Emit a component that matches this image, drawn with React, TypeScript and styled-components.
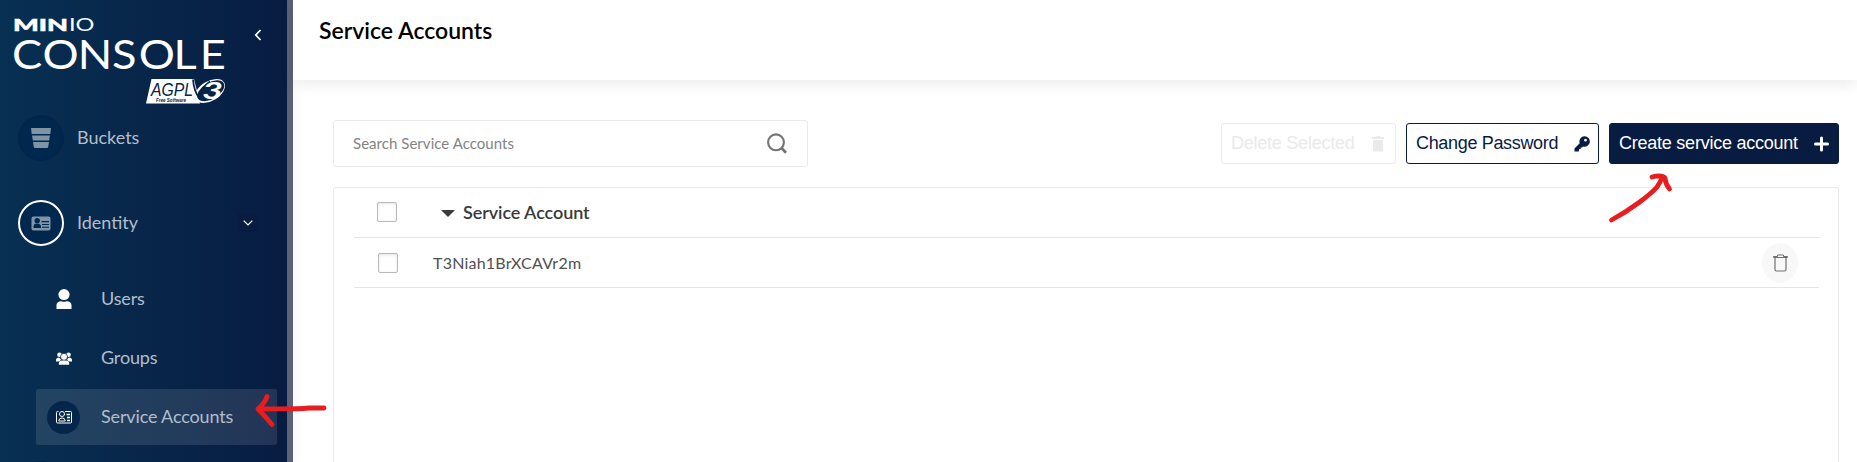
import React from "react";
import styled, { createGlobalStyle, css } from "styled-components";

const GlobalStyle = createGlobalStyle`
  *, *::before, *::after { box-sizing: border-box; }
  html, body { margin: 0; padding: 0; background: #fff; }
  body { overflow: hidden; font-family: Lato, "Liberation Sans", sans-serif; }
  svg { display: block; flex: none; }
`;

const Shell = styled.div`
  position: relative;
  display: flex;
  width: 1857px;
  height: 462px;
  overflow: hidden;
`;

const Sidebar = styled.aside`
  flex: 0 0 293px;
  display: flex;
  flex-direction: column;
  border-right: 6px solid #5b6276;
  background: linear-gradient(90deg, #073052 0%, #081c42 100%) padding-box;
  color: #b2becb;
  font-size: 18px;
`;

const Brand = styled.div`
  flex: none;
  display: flex;
  height: 115px;
  padding: 15px 0 0 10px;
`;

const Collapse = styled.div`
  margin: 14px 0 0 24px;
`;

const MenuItem = styled.div<{ $gap?: number }>`
  flex: none;
  display: flex;
  align-items: center;
  height: 46px;
  margin-bottom: ${(p) => p.$gap ?? 0}px;
  padding: 0 30px 0 18px;
`;

const MenuIcon = styled.span<{ $active?: boolean }>`
  display: flex;
  align-items: center;
  justify-content: center;
  width: 46px;
  height: 46px;
  margin-right: 13px;
  border-radius: 50%;
  border: 2px solid ${(p) => (p.$active ? "#fff" : "#04254a")};
  background: #00274d;
`;

const MenuLabel = styled.span`
  flex: 1;
  padding-bottom: 2px;
  white-space: nowrap;
`;

const Toggle = styled.span`
  display: flex;
  align-items: center;
  justify-content: center;
  width: 19px;
  height: 18px;
  border-radius: 2px;
  background: #081c42;
`;

const SubMenu = styled.div`
  flex: none;
  display: flex;
  flex-direction: column;
  gap: 3px;
  margin-bottom: 16px;
  padding: 0 10px 0 36px;
  letter-spacing: -0.15px;
`;

const SubItem = styled.div<{ $selected?: boolean }>`
  display: flex;
  align-items: center;
  height: 56px;
  padding-left: 11px;
  border-radius: 2px;
  ${(p) => p.$selected && css`background: rgba(255, 255, 255, 0.11);`}
`;

const SubIcon = styled.span<{ $selected?: boolean }>`
  display: flex;
  align-items: center;
  justify-content: center;
  width: 33px;
  height: 33px;
  margin-right: 21px;
  border-radius: 50%;
  color: #fff;
  ${(p) => p.$selected && css`background: #06254a;`}
`;

const Main = styled.main`
  flex: 1;
  display: flex;
  flex-direction: column;
  min-width: 0;
  box-shadow: inset 8px 0 8px -6px rgba(0, 0, 0, 0.04);
`;

const Header = styled.header`
  flex: 0 0 80px;
  padding: 15px 0 0 26px;
  background: #fff;
  box-shadow: 0 4px 14px rgba(0, 0, 0, 0.08);
`;

const Title = styled.h1`
  margin: 0;
  font-size: 23px;
  font-weight: 600;
  line-height: 30px;
  color: #000;
`;

const Content = styled.section`
  flex: 1;
  display: flex;
  flex-direction: column;
  padding: 40px 18px 0 40px;
`;

const Toolbar = styled.div`
  flex: none;
  display: flex;
  align-items: center;
  justify-content: space-between;
  height: 47px;
  margin-bottom: 20px;
`;

const Search = styled.div`
  display: flex;
  align-items: center;
  justify-content: space-between;
  width: 475px;
  height: 47px;
  padding: 0 20px 0 19px;
  border: 1px solid #eaeaea;
  border-radius: 3px;
  font-size: 15px;
  line-height: 18px;
  color: #838383;
`;

const SearchHint = styled.span`
  margin-top: -1px;
  letter-spacing: 0.04px;
`;

const Actions = styled.div`
  display: flex;
  gap: 10px;
`;

const Button = styled.button<{ $kind: "disabled" | "outline" | "solid"; $width: number }>`
  display: flex;
  align-items: center;
  justify-content: space-between;
  width: ${(p) => p.$width}px;
  height: 41px;
  padding: 0 8px 0 9px;
  border: 1px solid ${(p) => (p.$kind === "disabled" ? "#eaeaea" : "#081c42")};
  border-radius: 3px;
  background: ${(p) => (p.$kind === "solid" ? "#081c42" : "#fff")};
  color: ${(p) => ({ disabled: "#eaeaea", outline: "#081c42", solid: "#fff" })[p.$kind]};
  font-family: "Liberation Sans", Arial, sans-serif;
  font-size: 18px;
  letter-spacing: ${(p) => (p.$kind === "outline" ? -0.33 : -0.24)}px;
  white-space: nowrap;
`;

const Panel = styled.div`
  flex: 1;
  padding: 0 19px 0 20px;
  border: 1px solid #eaeaea;
  border-bottom: 0;
  border-radius: 3px 3px 0 0;
`;

const Row = styled.div<{ $head?: boolean }>`
  display: flex;
  align-items: center;
  height: 50px;
  padding-bottom: ${(p) => (p.$head ? 1 : 0)}px;
  padding-left: ${(p) => (p.$head ? 23 : 24)}px;
  padding-right: 21px;
  border-bottom: 1px solid #e5e5e5;
  font-size: ${(p) => (p.$head ? 18 : 16)}px;
  font-weight: ${(p) => (p.$head ? 600 : 400)};
  color: #393939;
`;

const Checkbox = styled.span`
  width: 20px;
  height: 20px;
  border: 1px solid #b9b9b9;
  border-radius: 2px;
  background: #fff;
  box-shadow: inset 0 1px 3px rgba(0, 0, 0, 0.1);
`;

const SortCell = styled.span`
  display: flex;
  align-items: center;
  gap: 8px;
  margin-left: 44px;
  letter-spacing: -0.08px;

  svg { margin-top: 3px; }
`;

const KeyCell = styled.span`
  flex: 1;
  margin-left: 35px;
  color: #505050;
  letter-spacing: 0.22px;
`;

const RowAction = styled.span`
  display: flex;
  align-items: center;
  justify-content: center;
  width: 36px;
  height: 40px;
  border-radius: 50%;
  background: #f8f8f8;
`;

const Annotations = styled.svg`
  position: absolute;
  inset: 0;
  pointer-events: none;
`;

const Logo = () => (
  <svg width="220" height="92" viewBox="10 15 220 92" fill="#fff" fontFamily="Lato, sans-serif">
    <text x="13" y="31" fontSize="17" fontWeight="900" stroke="#fff" strokeWidth=".5" textLength="55" lengthAdjust="spacingAndGlyphs">MIN</text>
    <text x="69" y="31" fontSize="17.500" fontWeight="400" textLength="25.500" lengthAdjust="spacingAndGlyphs">IO</text>
    <text transform="scale(1.13 1)" x="10.600 37.700 68.700 99.100 122.700 153.500 176.800" y="69" fontSize="40">CONSOLE</text>
    <path d="M151.500 79H194L200 103.500H146Z" />
    <ellipse cx="210" cy="91" rx="16.500" ry="9.800" transform="rotate(-31 210 91)" />
    <ellipse cx="210.800" cy="90.800" rx="15" ry="8.300" fill="#072448" transform="rotate(-31 210.800 90.800)" />
    <path d="M193 79.500Q194 91 198.500 97Q201 88 210 81.500" fill="none" stroke="#072448" strokeWidth="1.800" />
    <text x="202" y="98.500" fontSize="23" fontWeight="700" fontStyle="italic" textLength="21" lengthAdjust="spacingAndGlyphs">3</text>
    <g fill="#072448" fontFamily="Liberation Sans, sans-serif" fontStyle="italic">
      <text x="151" y="96" fontSize="18" textLength="42" lengthAdjust="spacingAndGlyphs">AGPL</text>
      <text x="156" y="101.500" fontSize="5" fontWeight="700" textLength="30" lengthAdjust="spacingAndGlyphs">Free Software</text>
    </g>
  </svg>
);

const BucketIcon = () => (
  <svg width="20" height="20" viewBox="0 0 20 20" fill="#8094a8">
    <path d="M0 0H20L19.300 6H.7ZM1.100 7.500H18.900L18.200 12.500H1.800ZM2 14H18L17.200 19Q17 20 16 20H4Q3 20 2.800 19Z" />
  </svg>
);

const IdentityIcon = () => (
  <svg width="20" height="15" viewBox="0 0 20 15">
    <rect x=".5" y=".5" width="19" height="14" rx="2" fill="#8094a8" />
    <g fill="#00274d">
      <circle cx="6.200" cy="4.800" r="2.700" />
      <path d="M2.500 12V10Q3 7.700 5 7.700H7.500Q9.600 8 10 10V12Z" />
      <path d="M10.500 5H18V6.200H10.500ZM11 8H18V9.100H11ZM11 10.700H18V11.700H11Z" />
    </g>
  </svg>
);

const UserIcon = () => (
  <svg width="16" height="20" viewBox="0 0 16 20" fill="currentColor">
    <ellipse cx="8" cy="5.600" rx="5.600" ry="5.500" />
    <path d="M.5 20V16.500C.5 13.500 3 12.200 5.500 12.200Q8 13.400 10.500 12.200C13 12.200 15.500 13.500 15.500 16.500V20Z" />
  </svg>
);

const GroupIcon = () => (
  <svg width="16" height="13" viewBox="0 0 16 13" fill="currentColor">
    <circle cx="3.500" cy="2.800" r="2.300" />
    <circle cx="12.500" cy="2.800" r="2.300" />
    <path d="M0 9.500V7.500Q.4 5.500 3 5.500L5 7.500L3.500 9.500ZM16 9.500V7.500Q15.600 5.500 13 5.500L11 7.500L12.500 9.500Z" />
    <circle cx="8" cy="4.800" r="3.500" stroke="#07294c" strokeWidth=".8" />
    <path d="M2.800 12.800V11Q3.500 8.600 6 8.600H10Q12.500 8.600 13.200 11V12.800Z" />
  </svg>
);

const AccountIcon = () => (
  <svg width="16" height="14" viewBox="0 0 16 14" fill="none" stroke="currentColor" strokeWidth="1">
    <path d="M2.500 1.500H1.500Q.5 1.500 .5 2.500V12Q.5 13 1.500 13H14.500Q15.500 13 15.500 12V2.500Q15.500 1.500 14.500 1.500H9" />
    <circle cx="6" cy="4" r="2.500" />
    <path d="M2.800 10.500Q3 8 6 8T9.200 10.500V11H2.800Z" />
    <path d="M10.500 4.500H14M11 7.500H14M11 10.500H14" strokeWidth="1.700" />
  </svg>
);

const SearchIcon = () => (
  <svg width="20" height="21" viewBox="0 0 20 21" fill="none" stroke="#747474">
    <circle cx="9" cy="9.300" r="7.900" strokeWidth="2.100" />
    <path d="M14.500 15L19 19.700" strokeWidth="2.700" />
  </svg>
);

const SolidTrash = () => (
  <svg width="18" height="16" viewBox="0 0 18 16" fill="currentColor">
    <path d="M3 1H7L7.800 0H11.200L12 1H15V3H3ZM4 4H14V14Q14 15.500 12.500 15.500H5.500Q4 15.500 4 14Z" />
  </svg>
);

const KeyIcon = () => (
  <svg width="16" height="16" viewBox="0 0 16 16" fill="currentColor" fillRule="evenodd">
    <path d="M10.500 .3A5.200 5.200 0 1 1 9.200 10.500L8 11.500H6.700V13H5.200L4.800 15.500H.8Q.5 15.500 .5 15V12.500L5.700 7.200A5.200 5.200 0 0 1 10.500 .3ZM11.500 2.800A1.400 1.400 0 1 0 11.500 5.600A1.400 1.400 0 1 0 11.500 2.800Z" />
  </svg>
);

const PlusIcon = () => (
  <svg width="17" height="16" viewBox="0 0 17 16" stroke="currentColor" strokeWidth="3" strokeLinecap="round">
    <path d="M8.500 2V14M2.500 8H14.500" />
  </svg>
);

const OutlineTrash = () => (
  <svg width="15" height="18" viewBox="0 0 15 18" fill="none" stroke="#707070">
    <path d="M.5 3.500V2.500H4.500V1H10.500V2.500H14.500V3.500Z" strokeWidth="1" />
    <path d="M2 4V15.500Q2 17 3.500 17H11.500Q13 17 13 15.500V4" strokeWidth="1.200" />
  </svg>
);

export default function App() {
  return (
    <Shell>
      <GlobalStyle />
      <Sidebar>
        <Brand>
          <Logo />
          <Collapse>
            <svg width="8" height="12" viewBox="0 0 8 12" fill="none" stroke="#fff" strokeWidth="1.800"><path d="M6.500 1L1.800 6L6.500 11" /></svg>
          </Collapse>
        </Brand>
        <MenuItem $gap={39}>
          <MenuIcon><BucketIcon /></MenuIcon>
          <MenuLabel>Buckets</MenuLabel>
        </MenuItem>
        <MenuItem $gap={25}>
          <MenuIcon $active><IdentityIcon /></MenuIcon>
          <MenuLabel>Identity</MenuLabel>
          <Toggle>
            <svg width="10" height="6" viewBox="0 0 10 6" fill="none" stroke="#fff" strokeWidth="1.200"><path d="M.7 .7L5 5L9.300 .7" /></svg>
          </Toggle>
        </MenuItem>
        <SubMenu>
          <SubItem><SubIcon><UserIcon /></SubIcon><MenuLabel>Users</MenuLabel></SubItem>
          <SubItem><SubIcon><GroupIcon /></SubIcon><MenuLabel>Groups</MenuLabel></SubItem>
          <SubItem $selected><SubIcon $selected><AccountIcon /></SubIcon><MenuLabel>Service Accounts</MenuLabel></SubItem>
        </SubMenu>
        <MenuItem><MenuIcon /></MenuItem>
      </Sidebar>
      <Main>
        <Header><Title>Service Accounts</Title></Header>
        <Content>
          <Toolbar>
            <Search><SearchHint>Search Service Accounts</SearchHint><SearchIcon /></Search>
            <Actions>
              <Button $kind="disabled" $width={175} disabled>Delete Selected<SolidTrash /></Button>
              <Button $kind="outline" $width={193}>Change Password<KeyIcon /></Button>
              <Button $kind="solid" $width={230}>Create service account<PlusIcon /></Button>
            </Actions>
          </Toolbar>
          <Panel>
            <Row $head>
              <Checkbox />
              <SortCell>
                <svg width="14" height="7" viewBox="0 0 14 7" fill="#393939"><path d="M0 0H14L7 7Z" /></svg>
                Service Account
              </SortCell>
            </Row>
            <Row>
              <Checkbox />
              <KeyCell>T3Niah1BrXCAVr2m</KeyCell>
              <RowAction><OutlineTrash /></RowAction>
            </Row>
          </Panel>
        </Content>
      </Main>
      <Annotations width="1857" height="462" viewBox="0 0 1857 462" fill="none" stroke="#e91c1f" strokeWidth="4.800" strokeLinecap="round" strokeLinejoin="round">
        <path d="M324 408H309C291 409.500 277 408.500 258 409M267 396.500Q265 403 258 409Q265 416 272 424.500" />
        <path d="M1611.500 220C1632 209 1651 194 1657 187Q1660 183 1662.500 176.500M1652 177Q1662 174.500 1665 178Q1665.500 184 1669.500 189" />
      </Annotations>
    </Shell>
  );
}
